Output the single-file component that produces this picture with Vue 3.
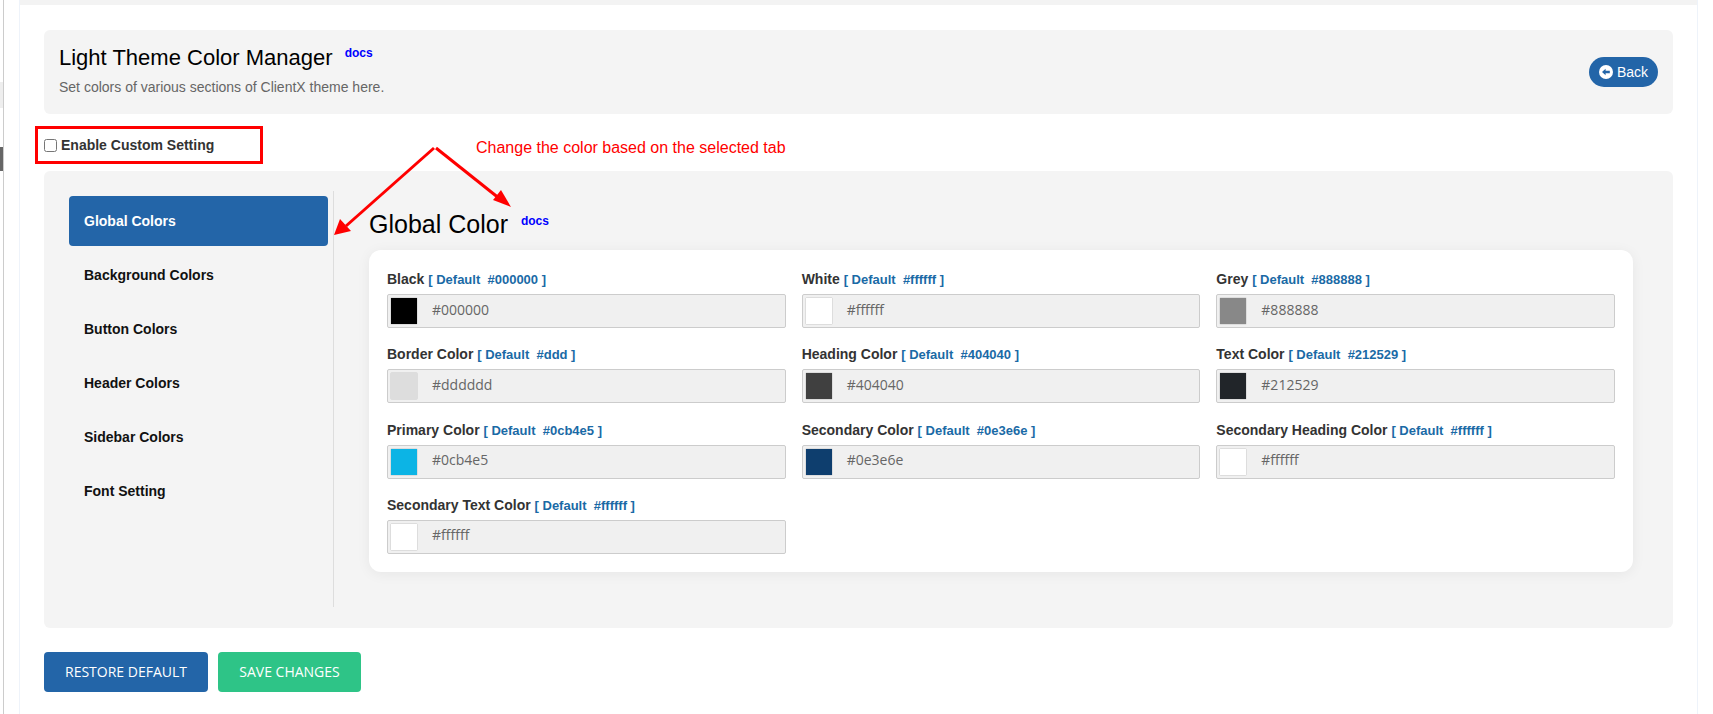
<script setup>
const tabs = ['Global Colors', 'Background Colors', 'Button Colors', 'Header Colors', 'Sidebar Colors', 'Font Setting']
const fields = [
  { name: 'Black', def: '#000000', value: '#000000' },
  { name: 'White', def: '#ffffff', value: '#ffffff' },
  { name: 'Grey', def: '#888888', value: '#888888' },
  { name: 'Border Color', def: '#ddd', value: '#dddddd' },
  { name: 'Heading Color', def: '#404040', value: '#404040' },
  { name: 'Text Color', def: '#212529', value: '#212529' },
  { name: 'Primary Color', def: '#0cb4e5', value: '#0cb4e5' },
  { name: 'Secondary Color', def: '#0e3e6e', value: '#0e3e6e' },
  { name: 'Secondary Heading Color', def: '#ffffff', value: '#ffffff' },
  { name: 'Secondary Text Color', def: '#ffffff', value: '#ffffff' }
]
</script>

<template>
  <div class="page">
    <div class="rail-edge">
      <div class="rail-mark light"></div>
      <div class="rail-mark dark"></div>
    </div>
    <div class="side-rail"></div>
    <main class="content">
      <div class="top-strip"></div>
      <section class="header-card">
        <div class="header-text">
          <h1 class="page-title">Light Theme Color Manager <a class="docs">docs</a></h1>
          <p class="page-sub">Set colors of various sections of ClientX theme here.</p>
        </div>
        <button class="back-btn">
          <svg width="14" height="14" viewBox="0 0 14 14">
            <circle cx="7" cy="7" r="7" fill="#fff" />
            <path d="M3 7 L6.6 3.8 V5.8 H10.8 V8.2 H6.6 V10.2 Z" fill="#2365a8" />
          </svg>
          Back
        </button>
      </section>

      <div class="enable-row">
        <label class="enable-box">
          <input type="checkbox" />
          <span>Enable Custom Setting</span>
        </label>
      </div>

      <section class="settings-card">
        <nav class="tabs">
          <div v-for="(tab, i) in tabs" :key="tab" class="tab" :class="{ active: i === 0 }">{{ tab }}</div>
        </nav>
        <div class="tab-body">
          <h2 class="section-title">Global Color <a class="docs">docs</a></h2>
          <div class="panel">
            <div v-for="f in fields" :key="f.name" class="field">
              <div class="field-label">{{ f.name }} <span class="field-def">[ Default &nbsp;{{ f.def }} ]</span></div>
              <div class="color-input">
                <span class="swatch"><i :style="{ background: f.value }"></i></span>
                <span class="hex">{{ f.value }}</span>
              </div>
            </div>
          </div>
        </div>
      </section>

      <div class="actions">
        <button class="btn btn-blue">RESTORE DEFAULT</button>
        <button class="btn btn-green">SAVE CHANGES</button>
      </div>
    </main>

    <!-- annotations drawn on top of the screenshot -->
    <div class="note">Change the color based on the selected tab</div>
    <svg class="arrows" width="1713" height="714" viewBox="0 0 1713 714">
      <path d="M434 148 L346 226" stroke="#f00" stroke-width="3" fill="none" />
      <path d="M334 235 L340 219 L351 231 Z" fill="#f00" />
      <path d="M436 148 L500 199" stroke="#f00" stroke-width="3" fill="none" />
      <path d="M511 207 L493 200 L501 190 Z" fill="#f00" />
    </svg>
  </div>
</template>

<style>
html, body {
  margin: 0;
  background: #fff;
}
</style>

<style scoped>
.page {
  position: relative;
  display: flex;
  width: 1713px;
  height: 714px;
  overflow: hidden;
  background: #fff;
  font-family: "Liberation Sans", Arial, sans-serif;
}
.rail-edge {
  width: 3px;
  flex: none;
  overflow: hidden;
}
.rail-mark.light {
  height: 26px;
  margin-top: 82px;
  background: #eee;
}
.rail-mark.dark {
  height: 24px;
  margin-top: 39px;
  background: #666;
}
.side-rail {
  width: 17px;
  flex: none;
  box-sizing: border-box;
  border-left: 1px solid #ccc;
  border-right: 1px solid #eef3fa;
}
.content {
  width: 1678px;
  flex: none;
  box-sizing: border-box;
  border-right: 1px solid #eef3fa;
  padding: 0 24px;
}
.top-strip {
  height: 5px;
  margin: 0 -24px 25px;
  background: #f3f3f3;
}
.header-card {
  display: flex;
  justify-content: space-between;
  align-items: center;
  height: 84px;
  box-sizing: border-box;
  padding: 0 15px;
  background: #f4f4f4;
  border-radius: 6px;
}
.header-text {
  padding-bottom: 4px;
}
.page-title {
  margin: 0;
  font-size: 22px;
  font-weight: 400;
  line-height: 28px;
  color: #000;
}
.docs {
  position: relative;
  top: -8px;
  margin-left: 6px;
  font-size: 12px;
  font-weight: 700;
  line-height: 1;
  color: #00f;
}
.page-sub {
  margin: 6px 0 0;
  font-size: 14px;
  line-height: 18px;
  color: #666;
}
.back-btn {
  display: flex;
  align-items: center;
  gap: 4px;
  height: 30px;
  width: 69px;
  padding: 0 0 0 10px;
  border: none;
  border-radius: 15px;
  background: #2365a8;
  color: #fff;
  font: 14px "Liberation Sans", Arial, sans-serif;
}
.enable-row {
  height: 57px;
  box-sizing: border-box;
  padding-top: 12px;
  margin-left: -9px;
}
.enable-box {
  display: flex;
  align-items: center;
  width: 228px;
  height: 38px;
  box-sizing: border-box;
  border: 3px solid #f00;
  padding-left: 6px;
  font-size: 14px;
  font-weight: 700;
  color: #333;
}
.enable-box input {
  margin: 0 4px 0 0;
  width: 13px;
  height: 13px;
}
.settings-card {
  display: flex;
  height: 457px;
  box-sizing: border-box;
  padding: 20px 40px 21px 25px;
  background: #f4f4f4;
  border-radius: 6px;
}
.tabs {
  width: 265px;
  flex: none;
  box-sizing: border-box;
  border-right: 1px solid #ddd;
  padding: 5px 5px 0 0;
  display: flex;
  flex-direction: column;
  gap: 4px;
}
.tab {
  height: 50px;
  display: flex;
  align-items: center;
  padding-left: 15px;
  font-size: 14px;
  font-weight: 700;
  color: #111;
  border-radius: 4px;
}
.tab.active {
  background: #2365a8;
  color: #fff;
}
.tab-body {
  flex: 1;
  padding: 19px 0 0 35px;
}
.section-title {
  margin: 0 0 12px;
  font-size: 25px;
  font-weight: 400;
  line-height: 28px;
  color: #000;
}
.panel {
  display: grid;
  grid-template-columns: repeat(3, 1fr);
  column-gap: 16px;
  row-gap: 16.33px;
  padding: 19px 18px 18px;
  background: #fff;
  border-radius: 12px;
  box-shadow: 0 2px 14px rgba(0, 0, 0, 0.06);
}
.field-label {
  height: 20px;
  margin-bottom: 5px;
  font-size: 14px;
  font-weight: 700;
  line-height: 20px;
  color: #333;
  white-space: nowrap;
}
.field-def {
  color: #1a6aa6;
  font-size: 13px;
}
.color-input {
  display: flex;
  align-items: center;
  height: 34px;
  box-sizing: border-box;
  border: 1px solid #ccc;
  border-radius: 2px;
  background: #f0f0f0;
  padding-left: 2px;
}
.swatch {
  display: block;
  width: 28px;
  height: 28px;
  box-sizing: border-box;
  background: #fff;
  border: 1px solid #ddd;
  border-radius: 2px;
}
.swatch i {
  display: block;
  width: 100%;
  height: 100%;
}
.hex {
  margin: 0 0 4px 14px;
  font-family: "Open Sans", sans-serif;
  font-size: 14px;
  color: #666;
}
.actions {
  display: flex;
  gap: 10px;
  margin-top: 24px;
}
.btn {
  height: 40px;
  padding: 0 0 2px;
  border: none;
  border-radius: 4px;
  color: #fff;
  font-family: "Open Sans", sans-serif;
  font-size: 14px;
}
.btn-blue {
  width: 164px;
  background: #2365a8;
}
.btn-green {
  width: 143px;
  background: #2ec487;
}
.note {
  position: absolute;
  left: 476px;
  top: 139px;
  font-size: 16px;
  line-height: 18px;
  color: #f00;
}
.arrows {
  position: absolute;
  left: 0;
  top: 0;
  pointer-events: none;
}
</style>
